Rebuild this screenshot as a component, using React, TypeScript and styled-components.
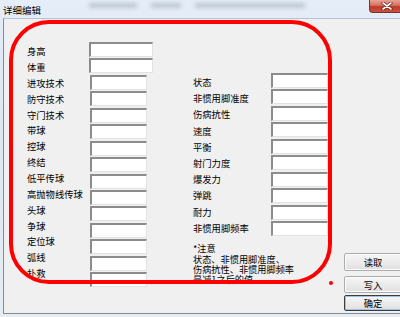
import styled, { createGlobalStyle } from "styled-components";

const GlobalStyle = createGlobalStyle`
    html, body {
        margin: 0;
        padding: 0;
        width: 400px;
        height: 317px;
        overflow: hidden;
        background: #e9eef4;
    }
    * {
        box-sizing: border-box;
    }
`;

const leftLabels = [
    "身高", "体重", "进攻技术", "防守技术", "守门技术", "带球", "控球", "终结",
    "低平传球", "高抛物线传球", "头球", "争球", "定位球", "弧线", "扑救",
];

const rightLabels = [
    "状态", "非惯用脚准度", "伤病抗性", "速度", "平衡", "射门力度", "爆发力",
    "弹跳", "耐力", "非惯用脚频率",
];

const noteLines = ["状态、非惯用脚准度、", "伤病抗性、非惯用脚频率", "是减1之后的值"];

export default function App() {
    return (
        <>
            <GlobalStyle/>
            <StyledWindow>
                <StyledTitleBar>
                    <StyledTitle>详细编辑</StyledTitle>
                    <StyledBlur>
                        <StyledBlob $w={48}/>
                        <StyledBlob $w={30}/>
                        <StyledBlob $w={110}/>
                    </StyledBlur>
                    <StyledClose>
                        <svg width="12" height="8" viewBox="0 0 12 8">
                            <path d="M2 1 L10 7 M10 1 L2 7" stroke="#5a1a14" strokeWidth="3" strokeLinecap="round"/>
                            <path d="M2 1 L10 7 M10 1 L2 7" stroke="#fff" strokeWidth="1.6" strokeLinecap="round"/>
                        </svg>
                    </StyledClose>
                </StyledTitleBar>
                <StyledClient>
                    <StyledLeftSection>
                        <StyledLabelStack $top={25.1} $pitch={15.86} $width={62}>
                            {leftLabels.map((l) => <StyledLabel key={l}>{l}</StyledLabel>)}
                        </StyledLabelStack>
                        <StyledInputStack $top={23}>
                            {leftLabels.map((l, i) => (
                                <StyledInput key={l} $wide={i < 2}/>
                            ))}
                        </StyledInputStack>
                    </StyledLeftSection>
                    <StyledRightSection>
                        <StyledFieldRow>
                            <StyledLabelStack $top={0.9} $pitch={16.2} $width={77}>
                                {rightLabels.map((l) => <StyledLabel key={l}>{l}</StyledLabel>)}
                            </StyledLabelStack>
                            <StyledInputStack $top={0}>
                                {rightLabels.map((l) => <StyledInput key={l} $wide={false}/>)}
                            </StyledInputStack>
                        </StyledFieldRow>
                        <StyledNote>
                            <StyledNoteHead>*注意</StyledNoteHead>
                            {noteLines.map((n) => <div key={n}>{n}</div>)}
                        </StyledNote>
                    </StyledRightSection>
                    <StyledButtonColumn>
                        <StyledButton $h={18}>读取</StyledButton>
                        <StyledButton $h={17} style={{marginTop: 5}}>写入</StyledButton>
                        <StyledButton $h={16} $default style={{marginTop: 2}}>确定</StyledButton>
                    </StyledButtonColumn>
                    <StyledMarkup/>
                    <StyledDot/>
                </StyledClient>
            </StyledWindow>
        </>
    );
}

const StyledWindow = styled.div`
    width: 404px;
    height: 317px;
    padding: 0 0 3px 3px;
    display: flex;
    flex-direction: column;
    background: linear-gradient(180deg, #e4edf8 0%, #dce7f3 40%, #e6ecf2 100%);
    font-family: "Noto Sans CJK SC", "Noto Sans", sans-serif;
    color: #000;
`;

const StyledTitleBar = styled.div`
    position: relative;
    height: 18px;
    display: flex;
    align-items: center;
    margin-left: -3px;
    padding-left: 3px;
`;

const StyledTitle = styled.span`
    font-size: 9.5px;
    line-height: 1;
    margin-top: 3px;
`;

const StyledBlur = styled.div`
    display: flex;
    gap: 14px;
    margin-left: 48px;
    margin-top: -8px;
    filter: blur(2px);
    opacity: 0.45;
`;

const StyledBlob = styled.div<{ $w: number }>`
    width: ${(p) => p.$w}px;
    height: 5px;
    background: #8d97a3;
`;

const StyledClose = styled.div`
    position: absolute;
    top: 0;
    right: 0;
    width: 35px;
    height: 13px;
    display: flex;
    align-items: center;
    justify-content: center;
    border: 1px solid #7c3127;
    border-top: none;
    border-right: none;
    border-radius: 0 0 0 4px;
    background: linear-gradient(180deg, #e6a394 0%, #d6705f 45%, #c0392b 55%, #c9503f 100%);
`;

const StyledClient = styled.div`
    position: relative;
    flex: 1;
    display: flex;
    background: #f0f0f0;
    border-top: 1px solid #b4c2d2;
    border-left: 1px solid #7f8d99;
    border-bottom: 1px solid #7f8d99;
`;

const StyledLeftSection = styled.div`
    display: flex;
    margin-left: 23px;
`;

const StyledLabelStack = styled.div<{ $top: number; $pitch: number; $width: number }>`
    display: flex;
    flex-direction: column;
    width: ${(p) => p.$width}px;
    padding-top: ${(p) => p.$top}px;
    font-size: 9.3px;
    line-height: ${(p) => p.$pitch}px;
    white-space: nowrap;
`;

const StyledLabel = styled.div`
    height: inherit;
`;

const StyledInputStack = styled.div<{ $top: number }>`
    display: flex;
    flex-direction: column;
    gap: 1.44px;
    padding-top: ${(p) => p.$top}px;
`;

const StyledInput = styled.div<{ $wide: boolean }>`
    width: ${(p) => (p.$wide ? 64 : 57)}px;
    height: 15px;
    margin-left: ${(p) => (p.$wide ? 0 : 1)}px;
    background: #fff;
    border-style: solid;
    border-width: 2px 1px 1px 2px;
    border-color: #8c8c8c #e2e2e2 #e2e2e2 #8c8c8c;
`;

const StyledRightSection = styled.div`
    display: flex;
    flex-direction: column;
    margin-left: 40px;
    padding-top: 54px;
`;

const StyledFieldRow = styled.div`
    display: flex;
`;

const StyledNote = styled.div`
    margin-top: 7px;
    font-size: 9.2px;
    line-height: 10px;
    white-space: nowrap;
`;

const StyledNoteHead = styled.div`
    margin-bottom: 1px;
`;

const StyledButtonColumn = styled.div`
    display: flex;
    flex-direction: column;
    margin-left: 16px;
    padding-top: 234px;
`;

const StyledButton = styled.div<{ $h: number; $default?: boolean }>`
    width: 58px;
    height: ${(p) => p.$h}px;
    display: flex;
    align-items: center;
    justify-content: center;
    font-size: 9.3px;
    border: 1px solid ${(p) => (p.$default ? "#3c3c3c" : "#acacac")};
    border-radius: 2px;
    background: linear-gradient(180deg, #f6f6f6 0%, #ececec 50%, #dfdfdf 100%);
    box-shadow: inset 0 0 0 1px ${(p) => (p.$default ? "#9fc4e8" : "#fbfbfb")};
`;

const StyledMarkup = styled.div`
    position: absolute;
    left: 5px;
    top: 1px;
    width: 323px;
    height: 264px;
    border: 4px solid #ff0000;
    border-radius: 40px;
    pointer-events: none;
`;

const StyledDot = styled.div`
    position: absolute;
    left: 325px;
    top: 262px;
    width: 4px;
    height: 4px;
    border-radius: 50%;
    background: #ff0000;
`;
